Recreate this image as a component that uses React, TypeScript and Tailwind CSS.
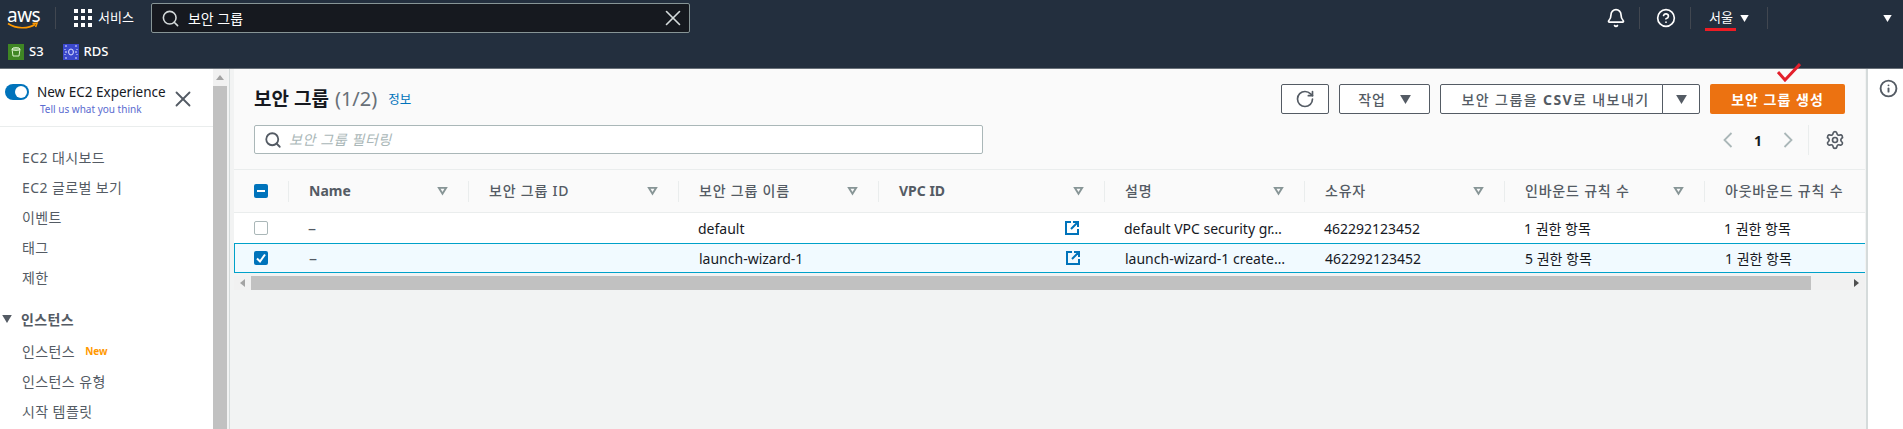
import { Bell, CircleHelp, Info, RotateCw, Search, Settings, X } from 'lucide-react'

const font = { fontFamily: '"Noto Sans", "Noto Sans CJK KR", sans-serif' }

type Column = { label: string; width: string; bold?: boolean }

const columns: Column[] = [
  { label: 'Name', width: 'w-[180px]', bold: true },
  { label: '보안 그룹 ID', width: 'w-[210px]' },
  { label: '보안 그룹 이름', width: 'w-[200px]' },
  { label: 'VPC ID', width: 'w-[226px]', bold: true },
  { label: '설명', width: 'w-[200px]' },
  { label: '소유자', width: 'w-[200px]' },
  { label: '인바운드 규칙 수', width: 'w-[200px]' },
  { label: '아웃바운드 규칙 수', width: 'w-[200px]' },
]

const rows = [
  { group: 'default', desc: 'default VPC security gr…', inbound: '1 권한 항목', selected: false },
  { group: 'launch-wizard-1', desc: 'launch-wizard-1 create…', inbound: '5 권한 항목', selected: true },
]

function Caret({ className }: { className: string }) {
  return (
    <svg viewBox="0 0 12 10" className={className} fill="currentColor">
      <path d="M0 0h12L6 10z" />
    </svg>
  )
}

function SortIcon() {
  return (
    <svg viewBox="0 0 12 10" className="w-[11px] h-[10px] text-[#879596]" fill="none" stroke="currentColor" strokeWidth="2">
      <path d="M2 1.5h8L6 8z" />
    </svg>
  )
}

function ExternalIcon() {
  return (
    <svg viewBox="0 0 14 14" className="w-[14px] h-[14px] text-[#0073bb]" fill="none" stroke="currentColor" strokeWidth="2">
      <path d="M6 1H1v12h12V8" />
      <path d="M8 1h5v5M13 1 6 8" />
    </svg>
  )
}

function Chevron({ path }: { path: string }) {
  return (
    <svg viewBox="0 0 10 16" className="w-[10px] h-[16px] text-[#aab7b8]" fill="none" stroke="currentColor" strokeWidth="1.8">
      <path d={path} />
    </svg>
  )
}

function AwsLogo() {
  return (
    <div className="relative w-[32px] h-[24px] ml-[7px]">
      <span className="block text-[19px] leading-[19px] text-white tracking-[-0.5px]">aws</span>
      <svg viewBox="0 0 32 8" className="absolute left-0 top-[16px] w-[32px] h-[8px]" fill="none" stroke="#ff9900" strokeWidth="1.6">
        <path d="M1 1.5C9 7 21 7 28 2.5" />
        <path d="M25.5 1.5 30 1.2 28.6 5" />
      </svg>
    </div>
  )
}

function GridIcon() {
  return (
    <div className="grid grid-cols-3 gap-[3px] w-[18px]">
      {Array.from({ length: 9 }).map((_, i) => (
        <span key={i} className="w-[4px] h-[4px] bg-white" />
      ))}
    </div>
  )
}

function Divider() {
  return <span className="block w-px h-[22px] bg-[#414750]" />
}

function Header() {
  return (
    <header className="h-[69px] bg-[#232f3e] border-b border-[#687078] shrink-0">
      <div className="relative flex items-center h-[36px]">
        <AwsLogo />
        <span className="w-px h-[22px] bg-[#414750] ml-[16px]" />
        <div className="ml-[18px]">
          <GridIcon />
        </div>
        <span className="ml-[6px] text-[13px] text-white">서비스</span>
        <div className="ml-[17px] w-[539px] h-[30px] flex items-center bg-[#16191f] border border-[#879596] rounded-[2px]">
          <Search className="ml-[9px] w-[19px] h-[19px] text-[#d5dbdb]" strokeWidth={2} />
          <span className="ml-[8px] text-[14px] text-white flex-1">보안 그룹</span>
          <X className="mr-[3px] w-[26px] h-[26px] text-[#d5dbdb]" strokeWidth={1.5} />
        </div>
        <div className="ml-auto flex items-center">
          <Bell className="w-[20px] h-[20px] text-white" strokeWidth={2} />
          <span className="ml-[13px]"><Divider /></span>
          <CircleHelp className="ml-[16px] w-[20px] h-[20px] text-white" strokeWidth={2} />
          <span className="ml-[14px]"><Divider /></span>
          <div className="relative ml-[18px] flex items-center">
            <span className="text-[13px] text-white">서울</span>
            <Caret className="ml-[7px] w-[9px] h-[7px] text-white" />
            <span className="absolute left-[-4px] top-[20px] w-[31px] h-[3px] bg-[#ed1c24]" />
          </div>
          <span className="ml-[18px]"><Divider /></span>
          <Caret className="ml-[115px] mr-[11px] w-[9px] h-[7px] text-white" />
        </div>
      </div>
      <div className="flex items-center h-[32px] text-[13px] font-medium text-white">
        <svg viewBox="0 0 16 16" className="ml-[8px] w-[16px] h-[16px]">
          <rect width="16" height="16" fill="#3f8624" />
          <path d="M4 5h8l-1 7H5z" fill="none" stroke="#d9f2cc" strokeWidth="1" />
          <ellipse cx="8" cy="5" rx="4" ry="1.4" fill="none" stroke="#d9f2cc" strokeWidth="1" />
        </svg>
        <span className="ml-[5px]">S3</span>
        <svg viewBox="0 0 16 16" className="ml-[19px] w-[16px] h-[16px]">
          <rect width="16" height="16" fill="#3b48cc" />
          <ellipse cx="8" cy="8" rx="2.4" ry="3" fill="none" stroke="#dfe3ff" strokeWidth="1" />
          <path d="M2 2h2M12 2h2M2 14h2M12 14h2M2 8h2M12 8h2M2 5v1M14 5v1M2 10v1M14 10v1" stroke="#dfe3ff" strokeWidth="1" />
        </svg>
        <span className="ml-[5px]">RDS</span>
      </div>
    </header>
  )
}

function NavLink({ label, isNew }: { label: string; isNew?: boolean }) {
  return (
    <div className="h-[30px] pl-[22px] flex items-center text-[14px] tracking-[0.4px] text-[#545b64]">
      {label}
      {isNew && <span className="ml-[10px] text-[10px] font-bold tracking-normal text-[#ff9900]">New</span>}
    </div>
  )
}

function Sidebar() {
  return (
    <aside className="w-[213px] shrink-0 bg-white overflow-hidden">
      <div className="relative h-[58px] border-b border-[#eaeded]">
        <div className="flex items-center pl-[5px] pt-[15px]">
          <span className="relative w-[24px] h-[16px] rounded-full bg-[#0073bb]">
            <span className="absolute right-[2px] top-[2px] w-[12px] h-[12px] rounded-full bg-white" />
          </span>
          <span className="ml-[8px] text-[13.5px] leading-[16px] text-[#16191f]">New EC2 Experience</span>
        </div>
        <div className="pl-[40px] mt-[2px] text-[10px] leading-[14px] text-[#5a6bd0]">Tell us what you think</div>
        <X className="absolute left-[170px] top-[17px] w-[26px] h-[26px] text-[#545b64]" strokeWidth={1.7} />
      </div>
      <div className="pt-[15px]">
        <NavLink label="EC2 대시보드" />
        <NavLink label="EC2 글로벌 보기" />
        <NavLink label="이벤트" />
        <NavLink label="태그" />
        <NavLink label="제한" />
        <div className="mt-[12px] mb-[2px] h-[30px] flex items-center pl-[2px] text-[14px] font-semibold tracking-[0.4px] text-[#545b64]">
          <Caret className="w-[10px] h-[8px] text-[#545b64]" />
          <span className="ml-[9px]">인스턴스</span>
        </div>
        <NavLink label="인스턴스" isNew />
        <NavLink label="인스턴스 유형" />
        <NavLink label="시작 템플릿" />
      </div>
    </aside>
  )
}

function SideScrollbar() {
  return (
    <div className="w-[14px] shrink-0 bg-[#f1f1f1] flex flex-col">
      <div className="h-[17px] flex items-center justify-center">
        <span className="w-0 h-0 border-x-[4px] border-x-transparent border-b-[5px] border-b-[#a3a3a3]" />
      </div>
      <div className="flex-1 bg-[#c1c1c1]" />
    </div>
  )
}

function OutlineButton({ children, className }: { children: React.ReactNode; className: string }) {
  return (
    <button className={`h-[30px] flex items-center justify-center border border-[#545b64] rounded-[2px] bg-white text-[14px] font-medium text-[#545b64] ${className}`}>
      {children}
    </button>
  )
}

function PanelHeader() {
  return (
    <div className="h-[101px] bg-[#fafafa] border-b border-[#eaeded] pt-[15px] pl-[20px] pr-[20px] flex justify-between shrink-0">
      <div>
        <div className="h-[30px] flex items-center">
          <h1 className="text-[19px] font-bold text-[#16191f]">보안 그룹</h1>
          <span className="ml-[6px] text-[20px] text-[#687078]">(1/2)</span>
          <span className="ml-[11px] mt-[2px] text-[12.5px] text-[#0073bb]">정보</span>
        </div>
        <div className="mt-[11px] w-[729px] h-[29px] flex items-center bg-white border border-[#aab7b8] rounded-[2px]">
          <Search className="ml-[9px] w-[18px] h-[18px] text-[#545b64]" strokeWidth={2.4} />
          <span className="ml-[7px] text-[14px] tracking-[0.6px] italic text-[#aab7b8]">보안 그룹 필터링</span>
        </div>
      </div>
      <div className="flex flex-col items-end">
        <div className="flex h-[30px]">
          <OutlineButton className="w-[48px]">
            <RotateCw className="w-[20px] h-[20px]" strokeWidth={2} />
          </OutlineButton>
          <OutlineButton className="ml-[10px] w-[91px]">
            <span className="tracking-[0.8px]">작업</span>
            <Caret className="ml-[14px] w-[11px] h-[9px]" />
          </OutlineButton>
          <OutlineButton className="ml-[10px] w-[223px] pl-[8px] rounded-r-none">
            <span className="tracking-[1.4px] whitespace-nowrap">
              보안 그룹을 <span className="font-bold">CSV</span>로 내보내기
            </span>
          </OutlineButton>
          <OutlineButton className="ml-[-1px] w-[38px] rounded-l-none">
            <Caret className="w-[11px] h-[9px]" />
          </OutlineButton>
          <button className="ml-[10px] w-[135px] h-[30px] rounded-[2px] bg-[#ec7211] text-[14px] font-bold tracking-[1px] text-white">보안 그룹 생성</button>
        </div>
        <div className="mt-[11px] h-[30px] flex items-center">
          <Chevron path="M8.5 1 1.5 8l7 7" />
          <span className="ml-[20px] w-[10px] text-center text-[14px] font-bold text-[#16191f]">1</span>
          <span className="ml-[20px]">
            <Chevron path="M1.5 1l7 7-7 7" />
          </span>
          <span className="ml-[15px] w-px h-[30px] bg-[#eaeded]" />
          <Settings className="ml-[16px] w-[20px] h-[20px] text-[#545b64]" strokeWidth={2} />
        </div>
      </div>
    </div>
  )
}

function Checkbox({ state }: { state: 'none' | 'checked' | 'mixed' }) {
  if (state === 'none') {
    return <span className="block w-[14px] h-[14px] bg-white border border-[#aab7b8] rounded-[2px]" />
  }
  return (
    <span className="flex items-center justify-center w-[14px] h-[14px] bg-[#0073bb] rounded-[2px]">
      <svg viewBox="0 0 14 14" className="w-[14px] h-[14px]" fill="none" stroke="white" strokeWidth="2">
        {state === 'checked' ? <path d="M3 7.5 6 10.5 11 3.5" /> : <path d="M3 7h8" />}
      </svg>
    </span>
  )
}

function SecurityGroupsTable() {
  return (
    <div className="overflow-hidden">
      <div className="h-[43px] bg-[#fafafa] border-b border-[#eaeded] flex items-center w-[1670px]">
        <div className="w-[54px] pl-[20px] shrink-0">
          <Checkbox state="mixed" />
        </div>
        {columns.map((col) => (
          <div key={col.label} className={`${col.width} shrink-0 h-[21px] border-l border-[#eaeded] pl-[20px] pr-[20px] flex items-center justify-between`}>
            <span className={`mt-[-2px] text-[14px] text-[#545b64] whitespace-nowrap ${col.bold ? 'font-bold' : 'font-medium tracking-[0.8px]'}`}>{col.label}</span>
            <SortIcon />
          </div>
        ))}
      </div>
      {rows.map((row) => (
        <div
          key={row.group}
          className={`flex items-center w-[1670px] text-[14px] text-[#16191f] ${
            row.selected ? 'h-[30px] bg-[#f1faff] border-y border-l border-[#00a1c9]' : 'h-[30px] bg-white'
          }`}
        >
          <div className={`w-[54px] shrink-0 ${row.selected ? 'pl-[19px]' : 'pl-[20px]'}`}>
            <Checkbox state={row.selected ? 'checked' : 'none'} />
          </div>
          <div className="w-[180px] shrink-0 pl-[20px] text-[16px] text-[#545b64]">–</div>
          <div className="w-[210px] shrink-0" />
          <div className="w-[200px] shrink-0 pl-[20px]">{row.group}</div>
          <div className="w-[226px] shrink-0 pl-[187px]">
            <ExternalIcon />
          </div>
          <div className="w-[200px] shrink-0 pl-[20px] whitespace-nowrap">{row.desc}</div>
          <div className="w-[200px] shrink-0 pl-[20px]">462292123452</div>
          <div className="w-[200px] shrink-0 pl-[20px]">{row.inbound}</div>
          <div className="w-[200px] shrink-0 pl-[20px]">1 권한 항목</div>
        </div>
      ))}
      <div className="mt-[3px] h-[14px] bg-[#f1f1f1] flex items-center">
        <div className="w-[17px] flex justify-center">
          <span className="w-0 h-0 border-y-[4px] border-y-transparent border-r-[5px] border-r-[#a3a3a3]" />
        </div>
        <div className="h-full w-[1560px] bg-[#c1c1c1]" />
        <div className="flex-1 flex justify-end pr-[6px]">
          <span className="w-0 h-0 border-y-[4px] border-y-transparent border-l-[5px] border-l-[#505050]" />
        </div>
      </div>
    </div>
  )
}

export default function App() {
  return (
    <div className="relative w-[1903px] h-[429px] overflow-hidden flex flex-col bg-[#f2f3f3]" style={font}>
      <Header />
      <div className="flex flex-1 min-h-0">
        <Sidebar />
        <SideScrollbar />
        <div className="w-[7px] shrink-0 bg-[#f2f3f3] pl-[2px]">
          <span className="block w-px h-full bg-[#d5dbdb]" />
        </div>
        <main className="w-[1631px] shrink-0 flex flex-col">
          <PanelHeader />
          <SecurityGroupsTable />
        </main>
        <div className="flex-1 border-l-[2px] border-[#d5dbdb] ml-[1px] bg-white flex justify-center pl-[6px] pt-[10px]">
          <Info className="w-[19px] h-[19px] text-[#545b64]" strokeWidth={2.4} />
        </div>
      </div>
      <svg viewBox="0 0 24 19" className="absolute left-[1777px] top-[63px] w-[24px] h-[19px]" fill="none" stroke="#e3202c" strokeWidth="3">
        <path d="M1 9 8 17 23 1" />
      </svg>
    </div>
  )
}
